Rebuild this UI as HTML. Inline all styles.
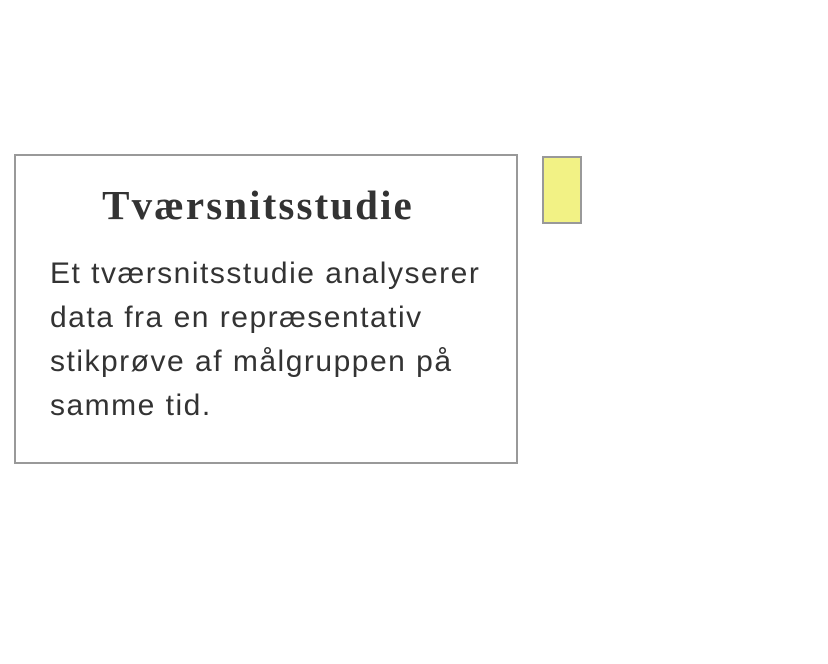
<!DOCTYPE html>
<html><head><meta charset="utf-8"><style>
html,body{margin:0;padding:0;background:#fff;width:828px;height:664px;overflow:hidden}
.box{position:absolute;left:14px;top:154px;width:500px;height:306px;border:2px solid #999;background:#fff}
.t{position:absolute;left:-8px;width:100%;top:25px;text-align:center;font-family:"Liberation Serif",serif;font-weight:bold;font-size:41px;letter-spacing:2.1px;color:#333;line-height:48px}
.b{position:absolute;left:34px;top:96px;width:470px;white-space:nowrap;font-family:"Liberation Sans",sans-serif;font-size:30px;letter-spacing:1.5px;line-height:44px;color:#333}
.y{position:absolute;left:542px;top:156px;width:36px;height:64px;border:2px solid #999;background:#f2f285}
</style></head><body>
<div class="box"><div class="t">Tværsnitsstudie</div>
<div class="b">Et tværsnitsstudie analyserer<br>data fra en repræsentativ<br>stikprøve af målgruppen på<br>samme tid.</div></div>
<div class="y"></div>
</body></html>
